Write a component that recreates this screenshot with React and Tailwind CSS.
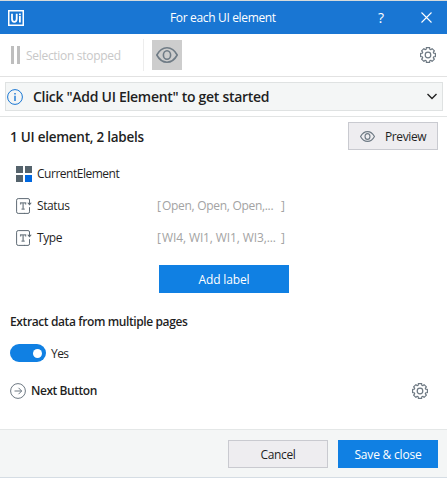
const FONT = "font-['Open_Sans','Noto_Sans',sans-serif]";

function gearOutline() {
  const points = [];
  for (let i = 0; i < 8; i++) {
    const a = (i * Math.PI) / 4;
    for (const [d, r] of [[-0.3, 6], [-0.22, 7.6], [0.22, 7.6], [0.3, 6]]) {
      points.push(`${(8 + r * Math.sin(a + d)).toFixed(2)},${(8 - r * Math.cos(a + d)).toFixed(2)}`);
    }
  }
  return points.join(" ");
}

function Gear() {
  return (
    <svg className="size-4 shrink-0" viewBox="0 0 16 16" fill="none" stroke="#6d7882" strokeWidth="1.2" strokeLinejoin="round">
      <polygon points={gearOutline()} />
      <circle cx="8" cy="8" r="2.8" />
    </svg>
  );
}

function Eye({ className, strokeWidth }) {
  return (
    <svg className={className} viewBox="0 0 22 16" fill="none" stroke="#6f7b85" strokeWidth={strokeWidth} strokeLinejoin="round">
      <path d="M0.8 8C6 -1.6 16 -1.6 21.2 8C16 17.6 6 17.6 0.8 8Z" />
      <ellipse cx="11" cy="8" rx="3.6" ry="4.3" />
    </svg>
  );
}

function TextField() {
  return (
    <svg className="size-4 shrink-0" viewBox="0 0 16 16" fill="none" stroke="#5f6b75">
      <path d="M8.8 15.4H2.2Q.6 15.4 .6 13.8V2.2Q.6 .6 2.2 .6H12Q13.5 .6 13.5 2V6M13.5 9.2V13.8Q13.5 15.4 12 15.4H8" />
      <path d="M11.2 4.7H15.8L13.5 7.4Z" fill="#5f6b75" stroke="none" />
      <path d="M4.6 6.6V4.9H9.6V6.6M7.1 4.9V11.2M5.5 11.2H8.7" stroke="#78828a" strokeWidth="1.3" />
    </svg>
  );
}

function LabelRow({ name, values, tracking }) {
  return (
    <div className="flex h-8 items-center pl-4">
      <TextField />
      <span className="ml-[5px] w-[120px] tracking-[-0.4px]">{name}</span>
      <span className="flex w-[128px] text-[#a3a3a3]">
        <span className="w-[5px]">[</span>
        <span className={tracking}>{values}</span>
        <span className="ml-auto">]</span>
      </span>
    </div>
  );
}

export default function App() {
  return (
    <div className={`flex h-[478px] w-[447px] flex-col overflow-hidden whitespace-nowrap border-t border-[#d5dadb] bg-white text-[12px] leading-4 text-[#1f1f1f] ${FONT}`}>
      <header className="flex h-[33px] shrink-0 items-center bg-[#1976d3] pl-2 text-white">
        <svg className="size-4" viewBox="0 0 16 16" fill="none" stroke="white">
          <rect x=".75" y=".75" width="14.5" height="14.5" strokeWidth="1.5" />
          <path d="M4 3.8V9Q4 11.8 6.3 11.8T8.7 9V3.8M11.9 6V12.4M11.9 3.4V5.2" strokeWidth="1.8" />
        </svg>
        <span className="ml-[146px] mt-px w-[180px] tracking-[-0.34px]">For each UI element</span>
        <span className="ml-[28px] w-3 text-[14px]">?</span>
        <svg className="ml-[31px] size-[11px]" viewBox="0 0 11 11" stroke="white" strokeWidth="1.1">
          <path d="M.5 .5L10.5 10.5M10.5 .5L.5 10.5" />
        </svg>
      </header>

      <div className="flex h-[43px] shrink-0 items-center border-b border-[#e2e2e2] pl-[11px]">
        <div className="flex h-[18px] gap-[3px]">
          <i className="w-[3px] bg-[#bebebe]" />
          <i className="w-[3px] bg-[#bebebe]" />
        </div>
        <span className="ml-[6px] mt-[2px] w-[117px] tracking-[-0.3px] text-[#c8c8c8]">Selection stopped</span>
        <i className="h-8 w-px bg-[#ededed]" />
        <div className="ml-2 flex size-[30px] items-center justify-center bg-[#cdcdcd]">
          <Eye className="h-4 w-[22px]" strokeWidth={1.6} />
        </div>
        <div className="ml-auto mr-[11px]"><Gear /></div>
      </div>

      <div className="flex h-10 shrink-0 items-center border-b border-[#e2e4e4] px-[5px] pr-1">
        <div className="flex h-[29px] flex-1 items-center border border-[#dfe2e2] bg-[#f4f6f6] pl-px pr-[5px]">
          <svg className="size-4" viewBox="0 0 16 16" fill="none" stroke="#1976d3">
            <circle cx="8" cy="8" r="7.4" />
            <path d="M8 4V5.5M8 6.8V12" strokeWidth="1.4" />
          </svg>
          <span className="ml-[10px] text-[14px] font-semibold tracking-[-0.29px]">Click "Add UI Element" to get started</span>
          <svg className="ml-auto h-[7px] w-[10px]" viewBox="0 0 10 7" fill="none" stroke="#222" strokeWidth="1.4">
            <path d="M.5 1L5 5.5L9.5 1" />
          </svg>
        </div>
      </div>

      <main className="flex flex-1 flex-col">
        <div className="flex items-center pl-[10px] pr-[9px] pt-[5px]">
          <span className="mt-[2px] text-[13.5px] font-semibold tracking-[-0.25px]">1 UI element, 2 labels</span>
          <button className="ml-auto flex h-7 w-[90px] items-center border border-[#c9cad0] bg-[#eeedf0] pl-[11px]">
            <Eye className="h-[11px] w-[15px]" strokeWidth={1.7} />
            <span className="ml-[10px] mt-[2px] tracking-[-0.4px]">Preview</span>
          </button>
        </div>
        <div className="mt-2 flex h-8 items-center pl-4">
          <div className="grid size-4 grid-cols-2 gap-[2px]">
            <i className="bg-[#55636c]" /><i className="bg-[#55636c]" /><i className="bg-[#55636c]" /><i className="bg-[#0067df]" />
          </div>
          <span className="ml-[5px] tracking-[-0.48px]">CurrentElement</span>
        </div>
        <LabelRow name="Status" values="Open, Open, Open,..." tracking="tracking-[-0.3px]" />
        <LabelRow name="Type" values="WI4, WI1, WI1, WI3,..." tracking="tracking-[-0.12px]" />
        <button className="ml-[159px] mt-[11px] h-7 w-[130px] bg-[#1080e3] pt-[2px] tracking-[-0.15px] text-white">Add label</button>
        <span className="ml-[10px] mt-[21px] text-[12px] font-semibold tracking-[-0.39px]">Extract data from multiple pages</span>
        <div className="ml-[10px] mt-[14px] flex items-center">
          <span className="flex h-[18px] w-9 items-center justify-end rounded-full bg-[#1080e3] pr-1"><i className="size-[9px] rounded-full bg-white" /></span>
          <span className="ml-[5px] mt-[2px] tracking-[-0.55px]">Yes</span>
        </div>
        <div className="ml-[10px] mt-[21px] flex items-center">
          <svg className="size-4" viewBox="0 0 16 16" fill="none" stroke="#6d7882">
            <circle cx="8" cy="8" r="7.4" /><path d="M4.5 8H11.5M8.5 4.8L11.7 8L8.5 11.2" />
          </svg>
          <span className="ml-[5px] font-semibold tracking-[-0.45px]">Next Button</span>
          <div className="ml-auto mr-[19px]"><Gear /></div>
        </div>
      </main>

      <footer className="flex h-[49px] shrink-0 items-center justify-end gap-[10px] border-y border-b-[#d5dde4] border-t-[#e4e7e7] bg-[#f4f6f6] pr-[9px] pt-px">
        <button className="h-7 w-[100px] border border-[#c9cad0] bg-[#eeedf0] pt-px tracking-[-0.35px]">Cancel</button>
        <button className="h-7 w-[100px] bg-[#1080e3] pt-px tracking-[-0.2px] text-white">Save &amp; close</button>
      </footer>
    </div>
  );
}
